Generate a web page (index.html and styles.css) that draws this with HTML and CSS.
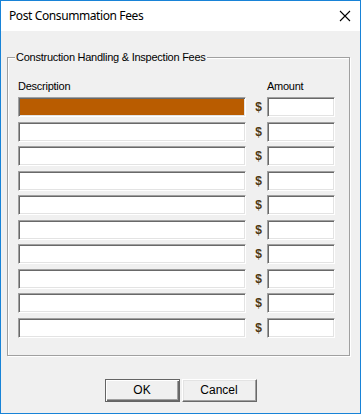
FILE: index.html
```html
<!DOCTYPE html>
<html lang="en">
<head>
  <meta charset="UTF-8" />
  <title>Post Consummation Fees</title>
  <link rel="stylesheet" href="styles.css">
</head>
<body>
  <div class="window">
    <div class="titlebar">
      <span class="title">Post Consummation Fees</span>
      <svg class="close" width="12" height="12" viewBox="0 0 12 12">
        <path d="M1 1 L11 11 M11 1 L1 11" stroke="#000" stroke-width="1.1" fill="none"/>
      </svg>
    </div>

    <div class="content">
      <fieldset class="group">
        <legend>Construction Handling &amp; Inspection Fees</legend>
        <div class="labels">
          <span class="lbl-desc">Description</span>
          <span class="lbl-amt">Amount</span>
        </div>
        <div class="rows" id="rows">
          <!-- fee rows injected below -->
        </div>
      </fieldset>

      <div class="buttons">
        <button class="btn default">OK</button>
        <button class="btn">Cancel</button>
      </div>
    </div>
  </div>

  <script>
    const rows = document.getElementById('rows');
    let html = '';
    for (let i = 0; i < 10; i++) {
      html += `
        <div class="row">
          <input class="field desc${i === 0 ? ' active' : ''}" type="text">
          <span class="dollar">$</span>
          <input class="field amt" type="text">
        </div>`;
    }
    rows.innerHTML = html;
  </script>
</body>
</html>
```

FILE: styles.css
```css
body {
  margin: 0;
  font-family: 'Liberation Sans', Arial, sans-serif;
  font-size: 11px;
  letter-spacing: -0.25px;
  color: #000;
}
.window {
  width: 361px;
  height: 414px;
  box-sizing: border-box;
  border: 1px solid #1883d7;
  background: #f0f0f0;
  display: flex;
  flex-direction: column;
}
.titlebar {
  height: 30px;
  background: #fff;
  display: flex;
  align-items: center;
  justify-content: space-between;
  padding: 0 9px 0 8px;
}
.title {
  font-family: 'Noto Sans', sans-serif;
  font-size: 12px;
  letter-spacing: -0.4px;
  padding-bottom: 1px;
}
.close {
  display: block;
  margin-bottom: 1px;
}
.content {
  flex: 1;
  padding: 20px 10px 0 6px;
}
.group {
  margin: 0;
  padding: 16px 14px 17px 10px;
  border: 1px solid #a0a0a0;
  box-shadow: 1px 1px 0 #fff, inset 1px 1px 0 #fff;
}
.group legend {
  margin-left: -3px;
  padding: 0 1px;
  line-height: 13px;
  background: #f0f0f0;
}
.labels {
  display: flex;
  line-height: 13px;
  margin-bottom: 4px;
}
.lbl-desc {
  width: 249px;
}
.rows {
  display: flex;
  flex-direction: column;
  gap: 4.5px;
}
.row {
  display: flex;
  align-items: center;
}
.field {
  box-sizing: border-box;
  height: 20px;
  margin: 0;
  padding: 0 2px;
  background: #fff;
  border: 1px solid;
  border-color: #a0a0a0 #fff #fff #a0a0a0;
  box-shadow: inset 1px 1px 0 #696969, inset -1px -1px 0 #e3e3e3;
  font: inherit;
  outline: none;
}
.field.desc {
  width: 228px;
}
.field.active {
  background: #b95c00;
}
.field.amt {
  width: 68px;
}
.dollar {
  box-sizing: border-box;
  width: 21px;
  padding-left: 4px;
  text-align: center;
  font-weight: bold;
  font-size: 12px;
  color: #4e3812;
}
.buttons {
  display: flex;
  justify-content: center;
  gap: 2px;
  margin-top: 23px;
  padding-left: 4px;
}
.btn {
  width: 75px;
  height: 23px;
  margin: 0;
  padding: 0;
  font-family: 'Liberation Sans', Arial, sans-serif;
  font-size: 12px;
  color: #000;
  background: #f0f0f0;
  border: 1px solid;
  border-color: #fff #696969 #696969 #fff;
  box-shadow: inset -1px -1px 0 #a0a0a0, inset 1px 1px 0 #e3e3e3;
}
.btn.default {
  border: 1px solid #646464;
  box-shadow: inset 1px 1px 0 #fff, inset -1px -1px 0 #696969, inset -2px -2px 0 #a0a0a0;
}
```
